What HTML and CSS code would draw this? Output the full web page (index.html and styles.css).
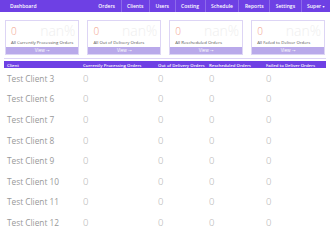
FILE: index.html
```html
<!DOCTYPE html>
<html>
<head>
<meta charset="utf-8">
<link rel="stylesheet" href="styles.css">
</head>
<body>
<nav class="topbar">
  <div class="brand">Dashboard</div>
  <div class="menu">
    <span class="menu-item">Orders</span>
    <span class="menu-item">Clients</span>
    <span class="menu-item">Users</span>
    <span class="menu-item">Costing</span>
    <span class="menu-item">Schedule</span>
    <span class="menu-item">Reports</span>
    <span class="menu-item">Settings</span>
    <span class="menu-item">Super <span class="caret">&#9662;</span></span>
  </div>
</nav>
<section class="cards">
  <div class="card">
    <div class="card-body">
      <div class="card-top"><span class="count">0</span><span class="pct">nan%</span></div>
      <div class="card-label">All Currently Processing Orders</div>
    </div>
    <div class="card-foot">View &#10141;</div>
  </div>
  <div class="card">
    <div class="card-body">
      <div class="card-top"><span class="count">0</span><span class="pct">nan%</span></div>
      <div class="card-label">All Out of Delivery Orders</div>
    </div>
    <div class="card-foot">View &#10141;</div>
  </div>
  <div class="card">
    <div class="card-body">
      <div class="card-top"><span class="count">0</span><span class="pct">nan%</span></div>
      <div class="card-label">All Rescheduled Orders</div>
    </div>
    <div class="card-foot">View &#10141;</div>
  </div>
  <div class="card">
    <div class="card-body">
      <div class="card-top"><span class="count">0</span><span class="pct">nan%</span></div>
      <div class="card-label">All Failed to Deliver Orders</div>
    </div>
    <div class="card-foot">View &#10141;</div>
  </div>
</section>
<section class="table">
  <div class="row head">
    <span>Client</span><span>Currently Processing Orders</span><span>Out of Delivery Orders</span><span>Rescheduled Orders</span><span>Failed to Deliver Orders</span>
  </div>
  <div class="row"><span class="name">Test Client 3</span><span class="num">0</span><span class="num">0</span><span class="num">0</span><span class="num">0</span></div>
  <div class="row"><span class="name">Test Client 6</span><span class="num">0</span><span class="num">0</span><span class="num">0</span><span class="num">0</span></div>
  <div class="row"><span class="name">Test Client 7</span><span class="num">0</span><span class="num">0</span><span class="num">0</span><span class="num">0</span></div>
  <div class="row"><span class="name">Test Client 8</span><span class="num">0</span><span class="num">0</span><span class="num">0</span><span class="num">0</span></div>
  <div class="row"><span class="name">Test Client 9</span><span class="num">0</span><span class="num">0</span><span class="num">0</span><span class="num">0</span></div>
  <div class="row"><span class="name">Test Client 10</span><span class="num">0</span><span class="num">0</span><span class="num">0</span><span class="num">0</span></div>
  <div class="row"><span class="name">Test Client 11</span><span class="num">0</span><span class="num">0</span><span class="num">0</span><span class="num">0</span></div>
  <div class="row"><span class="name">Test Client 12</span><span class="num">0</span><span class="num">0</span><span class="num">0</span><span class="num">0</span></div>
</section>
</body>
</html>
```
FILE: styles.css
```css
html, body {
  margin: 0;
  padding: 0;
  background: #fff;
  font-family: "Open Sans", "DejaVu Sans", sans-serif;
  overflow: hidden;
}
.topbar {
  display: flex;
  align-items: stretch;
  height: 12px;
  background: #6e40e4;
  color: #fff;
  font-size: 5px;
  font-weight: 600;
}
.brand {
  padding-left: 10px;
  line-height: 12px;
}
.menu {
  margin-left: auto;
  display: flex;
}
.menu-item {
  padding: 0 5.5px;
  line-height: 12px;
  border-left: 1px solid rgba(255,255,255,0.22);
}
.menu-item:first-child {
  border-left: none;
}
.caret {
  font-size: 4px;
}
.cards {
  display: grid;
  grid-template-columns: repeat(4, 1fr);
  gap: 8px;
  padding: 8px 5px 0;
}
.card {
  border: 1px solid #ddd5f5;
  display: flex;
  flex-direction: column;
}
.card-body {
  padding: 3px 5px 0;
  height: 23px;
}
.card-top {
  display: flex;
  justify-content: space-between;
  align-items: center;
  height: 13px;
}
.count {
  font-size: 10px;
  font-weight: 300;
  color: #f2a08a;
  line-height: 10px;
}
.pct {
  font-size: 14px;
  font-weight: 300;
  color: #efefef;
  line-height: 12px;
  margin-right: -2px;
}
.card-label {
  font-size: 4.3px;
  color: #555;
  margin-top: 2px;
  white-space: nowrap;
}
.card-foot {
  background: #b9a9ea;
  color: #fff;
  font-size: 4.5px;
  text-align: center;
  line-height: 7px;
  height: 7px;
}
.table {
  margin: 3px 4px 0;
  border-top: 1px solid #ddd5f5;
  padding-top: 2px;
}
.row {
  display: grid;
  grid-template-columns: 76px 75px 51px 57px 1fr;
  padding-left: 3px;
  height: 20.6px;
  align-items: center;
}
.row.head {
  height: 7px;
  background: #6e40e4;
  color: #fff;
  font-size: 4.3px;
  font-weight: 600;
}
.name {
  font-size: 8.3px;
  color: #999;
  white-space: nowrap;
}
.num {
  font-size: 9.5px;
  font-weight: 300;
  color: #aaa;
}
```
